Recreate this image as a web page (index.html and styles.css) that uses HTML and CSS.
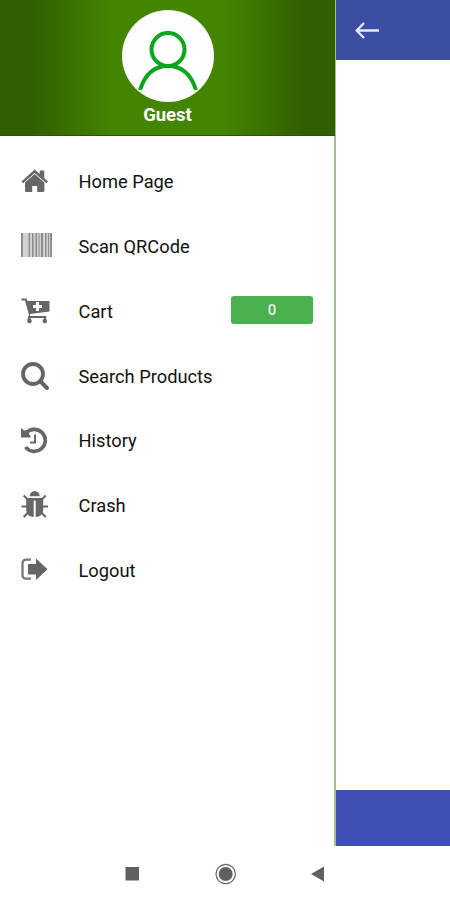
FILE: index.html
```html
<!DOCTYPE html>
<html lang="en">
<head>
<meta charset="utf-8">
<title>Menu</title>
<link rel="stylesheet" href="styles.css">
</head>
<body>
<div class="screen">
  <div class="app">
    <aside class="drawer">
      <header class="profile">
        <svg class="avatar" viewBox="0 0 92 92"><circle cx="46" cy="46" r="46" fill="#fff"/><g fill="none" stroke="#09a51b" stroke-width="4"><circle cx="46" cy="39.500" r="16.500"/><path d="M18 80C23 64 33 56 46 56S69 64 74 80"/></g></svg>
        <div class="name">Guest</div>
      </header>
      <nav class="menu">
        <a class="item"><svg class="icon" viewBox="0 0 40 40"><path d="M6.500 19.500L19.700 7.500l5 4.500V8.500h4.500v7.400L33 19.500l-1.500 1.800L19.700 11 8 21.300z"/><path d="M10 20.600L19.700 12.100l9.700 8.500v7.900q0 1.500-1.500 1.500h-5.700v-6h-5v6h-5.700q-1.500 0-1.500-1.500z"/></svg><span>Home Page</span></a>
        <a class="item"><svg class="icon bars" viewBox="0 0 40 40"><path fill="#d2d2d2" d="M6 6h31v24H6z"/><path d="M6 6h2v24H6zM13.500 6h1.500v24h-1.500zM17 6h1.500v24H17zM20.500 6h1.500v24h-1.500zM23.500 6h1v24h-1zM26 6h2v24h-2zM30 6h1.500v24H30zM33 6h1v24h-1zM35 6h2v24h-2z"/></svg><span>Scan QRCode</span></a>
        <a class="item"><svg class="icon" viewBox="0 0 40 40"><path fill-rule="evenodd" d="M6.500 7.500h5l1 2.500h22v10.500L14.800 23l.5 2h16v2H14.500v2h-2L14 24 10 9.500H6.500zM21 11v3h-3v3h3v3h3v-3h3v-3h-3v-3z"/><circle cx="14.500" cy="30" r="2.300"/><circle cx="29.800" cy="30" r="2.300"/><path d="M13 25h2.500v4H13zM29 25.500h2v3h-2z"/></svg><span>Cart</span><b class="badge">0</b></a>
        <a class="item"><svg class="icon" viewBox="0 0 40 40"><g fill="none" stroke="#666" stroke-width="3.800"><circle cx="18" cy="18" r="10"/><path stroke-linecap="round" stroke-width="4" d="M25.500 25.500l6.500 6.500"/></g></svg><span>Search Products</span></a>
        <a class="item"><svg class="icon" viewBox="0 0 40 40"><g fill="none" stroke="#666" stroke-width="3.600"><path d="M11 12.200A11 11 0 1 1 10.500 26"/><path stroke-width="2" d="M20 13.500v8h-5"/></g><path d="M6 7l3 2.500 3-.5 4 7.500H6z"/></svg><span>History</span></a>
        <a class="item"><svg class="icon" viewBox="0 0 40 40"><path d="M14.700 10.300a5 5.200 0 0 1 10 0zM11.200 12h17v12.500q-1 6-7.500 6.500V14.500h-2V31q-6.500-.5-7.500-6.500z"/><path fill="none" stroke="#666" stroke-width="2" d="M8.700 9.500l4 4M30.700 9.500l-4 4M6.500 20.500h6M27 20.500h6M8.700 31l4.500-4.500M30.700 31l-4.500-4.500"/></svg><span>Crash</span></a>
        <a class="item"><svg class="icon" viewBox="0 0 40 40"><path fill="none" stroke="#777" stroke-width="2.300" d="M16 9.700h-4.500q-4 0-4 4v11q0 4 4 4H16"/><path d="M13 14h8V8.500l11.500 10.800L21 30v-5.500h-8z"/></svg><span>Logout</span></a>
      </nav>
    </aside>
    <main class="page">
      <header class="toolbar"><svg class="back" viewBox="0 0 26 20"><path d="M24 10.500H2M9 3L1.700 10.500 9 18"/></svg></header>
      <footer class="bottom"></footer>
    </main>
  </div>
  <div class="sysbar">
    <svg class="sys" viewBox="0 0 24 24"><path d="M5.500 5h13.500v13.500H5.500z"/></svg>
    <svg class="sys" viewBox="0 0 24 24"><circle cx="12.700" cy="12" r="9.700" fill="none" stroke="#666" stroke-width="1.200"/><circle cx="12.700" cy="12" r="7"/></svg>
    <svg class="sys" viewBox="0 0 24 24"><path d="M5 12L18 4.500v15z"/></svg>
  </div>
</div>
</body>
</html>
```
FILE: styles.css
```css
* { box-sizing: border-box; }
body { margin: 0; background: #fff; font-family: Roboto, sans-serif; }
.screen { width: 450px; height: 900px; display: flex; flex-direction: column; overflow: hidden; background: #fefefe; }
.app { height: 846px; display: flex; }
.drawer { width: 336px; border-right: 2px solid #a3c28a; background: #fefefe; }
.profile {
  height: 136px;
  margin-right: -1px;
  padding-top: 10px;
  display: flex;
  flex-direction: column;
  align-items: center;
  background: linear-gradient(90deg, #305e00 0%, #305e00 9%, #438500 34%, #438500 66%, #305e00 91%, #305e00 100%);
  border-bottom: 1px solid #265500;
}
.avatar { width: 92px; height: 92px; }
.name { margin-top: 2px; color: #fff; font-size: 18.5px; line-height: 22px; font-weight: 700; }
.menu { padding-top: 13.5px; }
.item { height: 64.75px; padding: 0 21px 0 15px; display: flex; align-items: center; font-size: 18.3px; color: #111; }
.icon { width: 40px; height: 40px; margin-right: 23.5px; flex: none; fill: #666; }
.bars { fill: #8c8c8c; }
.badge {
  width: 82px;
  height: 28px;
  margin-left: auto;
  margin-top: -2px;
  border-radius: 3px;
  background: #4caf50;
  color: #e5f6e5;
  font-size: 15px;
  font-weight: 500;
  line-height: 29px;
  text-align: center;
}
.page { flex: 1; display: flex; flex-direction: column; justify-content: space-between; background: #fff; }
.toolbar { height: 60px; padding-left: 19px; display: flex; align-items: center; background: #3b4ea4; }
.back { width: 26px; height: 20px; fill: none; stroke: #e5e9ff; stroke-width: 2.3; }
.bottom { height: 56px; background: #3f51b5; }
.sysbar { height: 54px; padding: 16px 0 0 120px; display: flex; gap: 69px; background: #fefefe; }
.sys { width: 24px; height: 24px; fill: #606060; }
```
